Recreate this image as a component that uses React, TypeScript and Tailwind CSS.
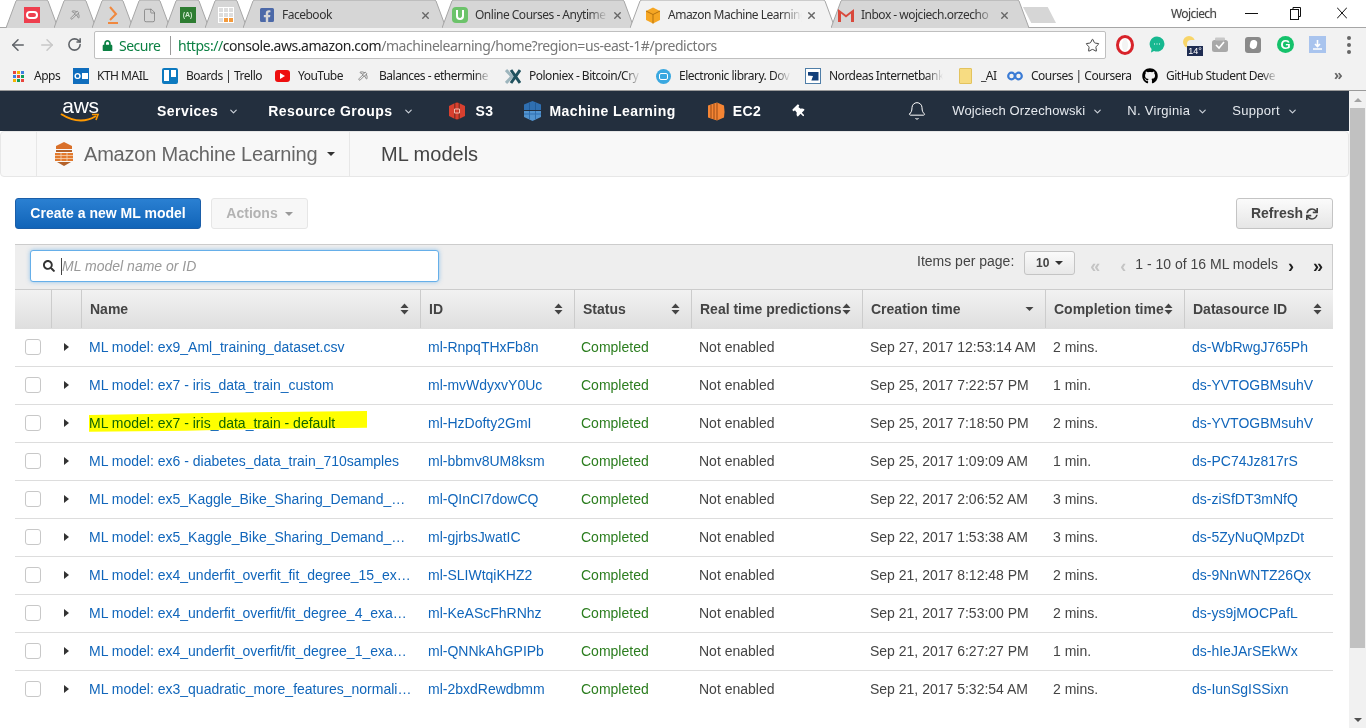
import type { ReactNode } from 'react';
import { ArrowLeft, ArrowRight, Bell, ChevronDown, File, Pickaxe, RotateCw, Star, X } from 'lucide-react';
import { FaFacebookSquare, FaGithub, FaLock, FaSearch, FaSync, FaThumbtack } from 'react-icons/fa';

const sans = 'font-["Liberation_Sans",Arial,sans-serif]';
const ui = 'font-["Noto_Sans",sans-serif]';
const cols = 'grid grid-cols-[36px_30px_339px_154px_117px_171px_183px_139px_149px]';
const fadeOut = '[mask-image:linear-gradient(to_right,black_85%,transparent)]';

const rows = [
  ['ML model: ex9_Aml_training_dataset.csv', 'ml-RnpqTHxFb8n', 'Sep 27, 2017 12:53:14 AM', '2 mins.', 'ds-WbRwgJ765Ph'],
  ['ML model: ex7 - iris_data_train_custom', 'ml-mvWdyxvY0Uc', 'Sep 25, 2017 7:22:57 PM', '1 min.', 'ds-YVTOGBMsuhV'],
  ['ML model: ex7 - iris_data_train - default', 'ml-HzDofty2GmI', 'Sep 25, 2017 7:18:50 PM', '2 mins.', 'ds-YVTOGBMsuhV'],
  ['ML model: ex6 - diabetes_data_train_710samples', 'ml-bbmv8UM8ksm', 'Sep 25, 2017 1:09:09 AM', '1 min.', 'ds-PC74Jz817rS'],
  ['ML model: ex5_Kaggle_Bike_Sharing_Demand_data_train', 'ml-QInCI7dowCQ', 'Sep 22, 2017 2:06:52 AM', '3 mins.', 'ds-ziSfDT3mNfQ'],
  ['ML model: ex5_Kaggle_Bike_Sharing_Demand_data_train', 'ml-gjrbsJwatIC', 'Sep 22, 2017 1:53:38 AM', '3 mins.', 'ds-5ZyNuQMpzDt'],
  ['ML model: ex4_underfit_overfit_fit_degree_15_examples', 'ml-SLIWtqiKHZ2', 'Sep 21, 2017 8:12:48 PM', '2 mins.', 'ds-9NnWNTZ26Qx'],
  ['ML model: ex4_underfit_overfit/fit_degree_4_examples', 'ml-KeAScFhRNhz', 'Sep 21, 2017 7:53:00 PM', '2 mins.', 'ds-ys9jMOCPafL'],
  ['ML model: ex4_underfit_overfit/fit_degree_1_examples', 'ml-QNNkAhGPIPb', 'Sep 21, 2017 6:27:27 PM', '1 min.', 'ds-hIeJArSEkWx'],
  ['ML model: ex3_quadratic_more_features_normalized', 'ml-2bxdRewdbmm', 'Sep 21, 2017 5:32:54 AM', '2 mins.', 'ds-IunSgISSixn'],
];

function Tab({ width, active, label, icon, pl = 15, pr = 15 }: { width: number; active?: boolean; label?: string; icon: ReactNode; pl?: number; pr?: number }) {
  return (
    <div className="relative h-[28px] -mr-[4px] shrink-0" style={{ width }}>
      <svg className="absolute inset-0" width={width} height={29}>
        <path
          d={`M0 28 L10 1 Q10.5 0 12 0 L${width - 12} 0 Q${width - 10.5} 0 ${width - 10} 1 L${width} 28`}
          fill={active ? '#f2f2f2' : '#d6d6d6'}
          stroke="#a6a6a6"
        />
      </svg>
      {label ? (
        <div className={`relative flex h-full items-center pt-[2px] text-[12px] tracking-[-0.5px] text-[#333] ${ui}`} style={{ paddingLeft: pl, paddingRight: pr }}>
          <span className="w-[16px] flex justify-center shrink-0">{icon}</span>
          <span className={`ml-[7px] flex-1 min-w-0 whitespace-nowrap overflow-hidden ${label.length > 10 ? fadeOut : ''}`}>{label}</span>
          <X size={11} strokeWidth={3} className="ml-[4px] text-[#666] shrink-0" />
        </div>
      ) : (
        <div className="relative flex h-full items-center justify-center pt-[2px]">{icon}</div>
      )}
    </div>
  );
}

function Bookmark({ width, icon, label, fade, gap = 8, start }: { width: number; icon: ReactNode; label: string; fade?: boolean; gap?: number; start?: boolean }) {
  return (
    <div className={`flex items-center shrink-0 ${fade ? 'pr-[14px]' : ''}`} style={{ width }}>
      <span className={`w-[16px] h-[16px] flex items-center shrink-0 ${start ? 'justify-start' : 'justify-center'}`}>{icon}</span>
      <span className={`whitespace-nowrap ${fade ? `flex-1 min-w-0 overflow-hidden ${fadeOut}` : ''}`} style={{ marginLeft: gap }}>{label}</span>
    </div>
  );
}

function Sort({ down }: { down?: boolean }) {
  return (
    <svg width="9" height="12" viewBox="0 0 9 12" className="shrink-0 text-[#444]" fill="currentColor">
      {!down && <path d="M0.5 5 L4.5 0.5 L8.5 5 Z" />}
      <path d={down ? 'M0.5 4 L8.5 4 L4.5 8 Z' : 'M0.5 7 L8.5 7 L4.5 11.5 Z'} />
    </svg>
  );
}

function Caret({ className }: { className?: string }) {
  return <span className={`inline-block w-0 h-0 border-x-[4px] border-x-transparent border-t-[4px] ${className ?? ''}`} />;
}

function NavChevron() {
  return <ChevronDown size={11} strokeWidth={2.5} className="text-[#ccd2da] shrink-0" />;
}

function TableHead({ label, sort = 'both' }: { label: string; sort?: 'both' | 'down' }) {
  return (
    <div className="flex items-center justify-between pl-[8px] pr-[11px] h-[38px] border-l border-[#cccccc] whitespace-nowrap">
      <span>{label}</span>
      <Sort down={sort === 'down'} />
    </div>
  );
}

export default function App() {
  return (
    <div className={`w-[1366px] h-[728px] overflow-hidden bg-white ${sans}`}>
      {/* tab strip */}
      <div className="relative h-[28px] flex items-start pl-[6px] border-b border-[#a6a6a6] bg-white">
        <Tab width={52} icon={
          <span className="w-[16px] h-[16px] bg-[#ee3f4e] flex items-center justify-center"><span className="w-[12px] h-[8px] rounded-[4px] border-2 border-white" /></span>
        } />
        <Tab width={42} icon={<Pickaxe size={10} className="text-[#888]" />} />
        <Tab width={41} icon={
          <svg width="10" height="18" viewBox="0 0 10 18" fill="none" stroke="#f0883e" strokeWidth="2"><path d="M2 1 L8 8 L2 14" /><path d="M0 17 H10" /></svg>
        } />
        <Tab width={41} icon={<File size={15} strokeWidth={1} className="text-[#666]" />} />
        <Tab width={43} icon={
          <span className="w-[16px] h-[16px] bg-[#2e7d32] flex items-center justify-center text-[7px] text-[#cfe8cf] font-bold">(A)</span>
        } />
        <Tab width={42} icon={
          <span className="w-[16px] h-[16px] bg-white grid grid-cols-3 gap-[1px] p-[1px]">
            <span className="bg-[#ddd]" /><span className="bg-[#ddd]" /><span className="bg-[#ddd]" />
            <span className="bg-[#ddd]" /><span className="bg-[#ddd]" /><span className="bg-[#ddd]" />
            <span className="bg-[#ddd]" /><span className="bg-[#f39a3c]" /><span className="bg-[#f39a3c]" />
          </span>
        } />
        <Tab width={203} pl={16} pr={15} label="Facebook" icon={<FaFacebookSquare size={16} className="text-[#4c69a8]" />} />
        <Tab width={192} pl={10} pr={11} label="Online Courses - Anytime" icon={
          <span className="w-[16px] h-[16px] rounded-[4px] bg-[#6cc36a] flex items-center justify-center">
            <span className="w-[8px] h-[10px] border-x-2 border-b-2 border-white rounded-b-[4px]" />
          </span>
        } />
        <Tab width={205} active pl={15} pr={18} label="Amazon Machine Learning" icon={
          <svg width="16" height="17" viewBox="0 0 16 17"><path d="M8 0.5 L15 4 V13 L8 16.5 L1 13 V4 Z" fill="#f6a623" /><path d="M1 4 L8 7.5 L15 4 M8 7.5 V16.5" fill="none" stroke="#b5720f" strokeWidth="1" /></svg>
        } />
        <Tab width={198} pl={7} pr={19} label="Inbox - wojciech.orzecho" icon={
          <svg width="16" height="14" viewBox="0 0 16 14"><path d="M0 1 L8 7 L16 1 V14 H13 V5.5 L8 9.5 L3 5.5 V14 H0 Z" fill="#d9493c" /></svg>
        } />
        <div className="ml-[-2px] mt-[7px] h-[16px] w-[33px] bg-[#d6d6d6] [clip-path:polygon(0_0,75%_0,100%_100%,25%_100%)] shrink-0" />
        <div className="ml-auto flex items-center h-[28px]">
          <span className={`w-[44px] whitespace-nowrap text-[12px] tracking-[-0.6px] text-[#444] [text-shadow:0_0_2px_#fff,0_0_1px_#888] ${ui}`}>Wojciech</span>
          <svg className="ml-[30px] -mt-[2px]" width="13" height="13" viewBox="0 0 13 13" stroke="#111"><path d="M0 6.5 H13" /></svg>
          <svg className="ml-[32px] -mt-[2px]" width="11" height="13" viewBox="0 0 11 13" fill="none" stroke="#111"><path d="M3 2.5 V0.5 H10.5 V9.5 H8" /><rect x="0.5" y="2.5" width="8" height="10" /></svg>
          <svg className="ml-[36px] mr-[19px] -mt-[2px]" width="10" height="12" viewBox="0 0 10 12" fill="none" stroke="#111"><path d="M0 0.5 L10 11.5 M10 0.5 L0 11.5" /></svg>
        </div>
      </div>

      {/* address bar */}
      <div className="h-[33px] bg-[#f2f2f2] flex items-center">
        <ArrowLeft size={18} className="ml-[9px] text-[#5f6368]" />
        <ArrowRight size={18} className="ml-[11px] text-[#c8c8c8]" />
        <RotateCw size={15} strokeWidth={2.5} className="ml-[11px] text-[#5f6368]" />
        <div className={`ml-[12px] w-[1012px] h-[28px] mt-[1px] pt-[1px] bg-white border border-[#bfbfbf] rounded-[2px] flex items-center text-[14px] ${ui}`}>
          <FaLock size={11} className="ml-[7px] text-[#0b8043]" />
          <span className="ml-[6px] text-[#0b8043] w-[44px] tracking-[-0.5px]">Secure</span>
          <span className="ml-[7px] w-px h-[19px] bg-[#999]" />
          <span className="ml-[7px] whitespace-nowrap tracking-[-0.44px]">
            <span className="text-[#0b8043]">https://</span>
            <span className="text-[#222]">console.aws.amazon.com</span>
            <span className="text-[#777]">/machinelearning/home?region=us-east-1#/predictors</span>
          </span>
          <Star size={15} strokeWidth={1.6} className="ml-auto mr-[5px] text-[#444]" />
        </div>
        <div className="relative flex items-center">
          <svg className="ml-[10px]" width="18" height="20" viewBox="0 0 18 20"><ellipse cx="9" cy="10" rx="7.5" ry="8.5" fill="#fff" stroke="#d8232a" strokeWidth="3" /><ellipse cx="9" cy="10" rx="3" ry="6" fill="#f4f4f4" /></svg>
          <svg className="ml-[15px]" width="16" height="17" viewBox="0 0 16 17"><path d="M8 0.5 A7.5 7.5 0 1 1 5 14.9 L2 16.5 L2.6 13 A7.5 7.5 0 0 1 8 0.5 Z" fill="#17b890" /><path d="M5 8 H6 M7.5 8 H8.5 M10 8 H11" stroke="#fff" strokeWidth="1.2" /></svg>
          <span className="relative ml-[17px] w-[20px] h-[20px]">
            <span className="absolute left-[1px] top-[1px] w-[12px] h-[12px] rounded-full bg-[#f8d568]" />
            <span className="absolute left-[5px] top-[5px] w-[15px] h-[8px] rounded-full bg-[#eceff3]" />
            <span className="absolute left-[5px] top-[11px] w-[16px] h-[10px] bg-[#1f2d52] text-white text-[9px] leading-[10px] text-center">14°</span>
          </span>
          <svg className="ml-[10px]" width="16" height="15" viewBox="0 0 16 15"><rect x="0" y="3" width="16" height="12" rx="2.5" fill="#a8a8a8" /><path d="M4 8 L7 11 L12 5" fill="none" stroke="#fff" strokeWidth="1.6" /><rect x="3" y="0.5" width="10" height="3" rx="1" fill="#c8c8c8" /></svg>
          <span className="ml-[17px] w-[16px] h-[16px] rounded-[3px] bg-[#8a8a8a] flex items-center justify-center"><span className="w-[7px] h-[9px] rounded-[4px] rotate-12 bg-white" /></span>
          <span className="ml-[16px] w-[17px] h-[17px] rounded-full bg-[#15c26b] text-white text-[13px] font-bold leading-[17px] text-center">G</span>
          <span className="ml-[15px] w-[17px] h-[17px] bg-[#a9c4ee] flex items-center justify-center">
            <svg width="11" height="11" viewBox="0 0 11 11" fill="none" stroke="#fff" strokeWidth="1.6"><path d="M5.5 1 V7 M3 5 L5.5 7.5 L8 5 M1 10 H10" /></svg>
          </span>
          <span className="ml-[21px] flex flex-col gap-[3px]">
            <span className="w-[4px] h-[4px] rounded-full bg-[#666]" />
            <span className="w-[4px] h-[4px] rounded-full bg-[#666]" />
            <span className="w-[4px] h-[4px] rounded-full bg-[#666]" />
          </span>
        </div>
      </div>

      {/* bookmarks */}
      <div className={`h-[30px] pt-[1px] bg-[#f2f2f2] border-b border-[#9a9a9a] flex items-center pl-[10px] text-[12px] tracking-[-0.5px] text-[#222] ${ui}`}>
        <Bookmark width={63} label="Apps" icon={
          <span className="grid grid-cols-3 gap-[1px]">
            {['#e8453c', '#f4b400', '#3d7fe0', '#3d7fe0', '#e8453c', '#0f9d58', '#f4b400', '#0f9d58', '#e8453c'].map((c, i) => (
              <span key={i} className="w-[3px] h-[3px]" style={{ background: c }} />
            ))}
          </span>
        } />
        <Bookmark width={89} label="KTH MAIL" icon={
          <span className="relative w-[16px] h-[16px] bg-[#0f6dbd] text-white text-[9px] font-bold leading-[16px] pl-[1px]">
            O<span className="absolute right-[1px] top-[5px] w-[6px] h-[6px] bg-white" />
          </span>
        } />
        <Bookmark width={112} label="Boards | Trello" icon={
          <span className="w-[16px] h-[16px] rounded-[2px] bg-[#0c79bf] flex gap-[2px] p-[2px]"><span className="w-[5px] h-[11px] bg-white" /><span className="w-[5px] h-[7px] bg-white" /></span>
        } />
        <Bookmark width={84} label="YouTube" icon={
          <span className="w-[15px] h-[12px] rounded-[3px] bg-[#ee0f0f] flex items-center justify-center"><span className="w-0 h-0 border-y-[3px] border-y-transparent border-l-[5px] border-l-white" /></span>
        } />
        <Bookmark width={147} fade start gap={5} label="Balances - ethermine" icon={<Pickaxe size={10} className="text-[#777]" />} />
        <Bookmark width={150} fade label="Poloniex - Bitcoin/Cry" icon={
          <svg width="16" height="15" viewBox="0 0 16 15" fill="none" strokeWidth="3"><path d="M1 1 L7 7.5 L1 14" stroke="#9db5bd" /><path d="M15 1 L6 14 M6 1 L15 14" stroke="#20525f" /></svg>
        } />
        <Bookmark width={150} fade label="Electronic library. Dov" icon={
          <span className="w-[15px] h-[15px] rounded-full bg-[#3aa8e0] flex items-center justify-center"><span className="w-[9px] h-[7px] rounded-[2px] border border-white" /></span>
        } />
        <Bookmark width={152} fade label="Nordeas Internetbank" icon={
          <span className="w-[16px] h-[16px] border border-[#4f7ea8] bg-white flex items-center justify-center"><span className="w-[11px] h-[9px] bg-[#13407a] [clip-path:polygon(0_0,100%_0,100%_100%,35%_100%,50%_50%,0_45%)]" /></span>
        } />
        <Bookmark width={50} label="_AI" icon={
          <span className="w-[13px] h-[16px] bg-[#f7dc82] border border-[#e3c35e] rounded-[1px]" />
        } />
        <Bookmark width={135} label="Courses | Coursera" icon={
          <svg width="16" height="10" viewBox="0 0 16 10" fill="none" stroke="#3a7bd5" strokeWidth="2.2"><circle cx="4.5" cy="5" r="3.3" /><circle cx="11.5" cy="5" r="3.3" /></svg>
        } />
        <Bookmark width={150} fade label="GitHub Student Deve" icon={<FaGithub size={16} className="text-black" />} />
        <span className="ml-[42px] text-[#666] text-[14px] font-bold -mt-[4px]">»</span>
      </div>

      {/* page with scrollbar */}
      <div className="flex h-[637px]">
        <div className="w-[1349px] shrink-0">
          <nav className="h-[40px] bg-[#232f3e] flex items-center text-white text-[14px] pl-[60px]">
            <span className="relative w-[41px] h-[25px] shrink-0">
              <span className="absolute left-0 right-0 -top-[5px] text-center text-[21px] leading-[24px] tracking-[-0.3px] text-white">aws</span>
              <svg className="absolute left-0 top-[14px]" width="41" height="10" viewBox="0 0 41 10" fill="none" stroke="#f90" strokeWidth="2"><path d="M1 1 Q20 13 36 3" /><path d="M32 1.5 L38 1.5 L36 7" strokeWidth="1.6" /></svg>
            </span>
            <span className="ml-[56px] font-bold tracking-[0.45px]">Services</span>
            <span className="ml-[10px]"><NavChevron /></span>
            <span className="ml-[29px] font-bold tracking-[0.45px]">Resource Groups</span>
            <span className="ml-[11px]"><NavChevron /></span>
            <svg className="ml-[35px] -mt-[1px]" width="16" height="18" viewBox="0 0 16 18">
              <path d="M0 4 L5 1.5 V16.5 L0 14 Z" fill="#d8402f" />
              <path d="M16 4 L11 1.5 V16.5 L16 14 Z" fill="#d8402f" />
              <path d="M5 1.5 L8 0 L11 1.5 V16.5 L8 18 L5 16.5 Z" fill="#8c3123" />
              <path d="M6.5 1 H9.5 V17 H6.5 Z" fill="#d8402f" />
              <path d="M5.5 7 H10.5 V11 H5.5 Z" fill="none" stroke="#f2b8ac" strokeWidth="1" />
            </svg>
            <span className="ml-[10px] font-bold tracking-[0.45px]">S3</span>
            <svg className="ml-[30px]" width="19" height="20" viewBox="0 0 19 20">
              <path d="M9.5 0 L18 3.5 V9 H1 V3.5 Z" fill="#2f6fb0" />
              <path d="M1 10 H18 V16 L9.5 20 L1 16 Z" fill="#5294cf" />
              <path d="M6.5 1.5 V9 M12.5 1.5 V9" stroke="#205b99" />
              <path d="M1 13 H18 M6.5 10 V18 M12.5 10 V18" stroke="#2f6fb0" />
            </svg>
            <span className="ml-[7px] font-bold tracking-[0.45px]">Machine Learning</span>
            <svg className="ml-[31px]" width="18" height="19" viewBox="0 0 18 19">
              <path d="M1 3.5 L10 0.5 L17 3.5 Q18 9.5 17 15.5 L10 18.5 L1 15.5 Z" fill="#f58534" />
              <path d="M4 3 V16 M7 2 V17 M10 1 V18" stroke="#a9551d" strokeWidth="1.2" />
            </svg>
            <span className="ml-[8px] font-bold tracking-[0.45px]">EC2</span>
            <FaThumbtack size={13} className="ml-[32px] text-white -rotate-45" />
            <Bell size={20} strokeWidth={1.2} className="ml-[101px] text-white" />
            <span className="ml-[25px] text-[13px] tracking-[0.12px] text-[#e6eaef] whitespace-nowrap">Wojciech Orzechowski</span>
            <span className="ml-[7px]"><NavChevron /></span>
            <span className="ml-[24px] text-[13px] tracking-[0.3px] text-[#e6eaef] whitespace-nowrap">N. Virginia</span>
            <span className="ml-[7px]"><NavChevron /></span>
            <span className="ml-[24px] text-[13px] tracking-[0.3px] text-[#e6eaef] whitespace-nowrap">Support</span>
            <span className="ml-[7px]"><NavChevron /></span>
          </nav>

          <div className="h-[46px] bg-[#f8f8f8] border border-[#e7e7e7] rounded-[4px] flex items-center text-[20px]">
            <div className="w-[36px] h-full border-r border-[#e7e7e7] shrink-0" />
            <div className="w-[313px] h-full border-r border-[#e7e7e7] shrink-0 flex items-center pl-[17px] text-[#666]">
              <svg width="20" height="24" viewBox="0 0 20 24" className="shrink-0">
                <path d="M10 0 L18 4 V7 H2 V4 Z" fill="#d9702a" />
                <path d="M2 8 H18 V10 H2 Z" fill="#b4622a" />
                <path d="M1 11 H19 V19 H1 Z" fill="#e27a2e" />
                <path d="M3 20 H17 L10 24 Z" fill="#b4622a" />
                <path d="M1 13.5 H19 M1 16.5 H19 M7 11 V19 M13 11 V19" stroke="#f5d3b5" strokeWidth="0.8" />
              </svg>
              <span className="ml-[10px] whitespace-nowrap tracking-[-0.2px]">Amazon Machine Learning</span>
              <Caret className="ml-[10px] border-t-[#333]" />
            </div>
            <span className="ml-[31px] text-[#444] whitespace-nowrap">ML models</span>
          </div>

          <div className="pl-[15px] pt-[21px]">
            <div className="flex w-[1318px] items-center">
              <button className="h-[31px] w-[186px] rounded-[3px] border border-[#1b5ea8] bg-gradient-to-b from-[#2a80d2] to-[#1064b8] text-white text-[14px] font-bold">Create a new ML model</button>
              <button className="ml-[10px] h-[31px] w-[97px] rounded-[3px] border border-[#e6e6e6] bg-[#f7f7f7] text-[#b3b3b3] text-[14px] font-bold flex items-center justify-center gap-[7px]">
                Actions <Caret className="border-t-[#999]" />
              </button>
              <button className="ml-auto h-[31px] w-[97px] rounded-[3px] border border-[#c4c4c4] bg-gradient-to-b from-[#fbfbfb] to-[#e6e6e6] text-[#444] text-[14px] font-bold flex items-center justify-center gap-[3px]">
                Refresh <FaSync size={12} />
              </button>
            </div>

            <div className="w-[1318px] mt-[15px] relative">
              <div className="h-[46px] bg-[#eeeeee] border-y border-r border-[#cccccc] flex items-center text-[14px] text-[#444]">
                <div className="ml-[15px] h-[32px] w-[409px] -mt-[2px] bg-white rounded-[3px] border border-[#66afe9] shadow-[0_0_4px_rgba(102,175,233,0.7)] flex items-center">
                  <FaSearch size={12} className="ml-[12px] text-[#333]" />
                  <span className="ml-[6px] w-px h-[17px] bg-[#444]" />
                  <span className="italic text-[#999]">ML model name or ID</span>
                </div>
                <span className="ml-[478px] -mt-[11px] whitespace-nowrap text-[14px]">Items per page:</span>
                <div className="ml-[10px] -mt-[9px] h-[24px] w-[51px] rounded-[3px] border border-[#c4c4c4] bg-gradient-to-b from-[#fafafa] to-[#e8e8e8] flex items-center justify-center gap-[6px] text-[12px] font-bold">
                  10 <Caret className="border-t-[#333]" />
                </div>
                <span className="ml-[15px] -mt-[2px] text-[#c4c4c4] text-[18px] font-bold">«</span>
                <span className="ml-[20px] -mt-[2px] text-[#c4c4c4] text-[18px] font-bold">‹</span>
                <span className="ml-[9px] -mt-[6px] whitespace-nowrap">1 - 10 of 16 ML models</span>
                <span className="ml-[10px] -mt-[2px] text-[#222] text-[18px] font-bold">›</span>
                <span className="ml-[19px] -mt-[2px] text-[#222] text-[18px] font-bold">»</span>
              </div>

              <div className={`${cols} h-[39px] bg-gradient-to-b from-[#f2f2f2] to-[#dedede] text-[14px] font-bold text-[#444] items-start`}>
                <div />
                <div className="h-[38px] border-l border-[#cccccc]" />
                <TableHead label="Name" />
                <TableHead label="ID" />
                <TableHead label="Status" />
                <TableHead label="Real time predictions" />
                <TableHead label="Creation time" sort="down" />
                <TableHead label="Completion time" />
                <TableHead label="Datasource ID" />
              </div>

              {rows.map((r, i) => (
                <div key={r[1]} className={`${cols} h-[38px] items-center text-[14px] text-[#444] border-b ${i < rows.length - 1 ? 'border-[#dddddd]' : 'border-transparent'}`}>
                  <span className="ml-[10px] -mt-[2px] w-[16px] h-[16px] rounded-[3px] border border-[#c8c8c8] bg-white" />
                  <span className="ml-[13px] -mt-[2px] w-0 h-0 border-y-[4px] border-y-transparent border-l-[5px] border-l-[#333]" />
                  <a className="pl-[8px] pr-[8px] truncate text-[#1166bb]">{r[0]}</a>
                  <a className="pl-[8px] text-[#1166bb] whitespace-nowrap">{r[1]}</a>
                  <span className="pl-[7px] text-[#2b7d1e]">Completed</span>
                  <span className="pl-[8px]">Not enabled</span>
                  <span className="pl-[8px] whitespace-nowrap">{r[2]}</span>
                  <span className="pl-[8px]">{r[3]}</span>
                  <a className="pl-[8px] text-[#1166bb] whitespace-nowrap">{r[4]}</a>
                </div>
              ))}

              {/* marker highlight drawn over the third row */}
              <svg className="absolute left-[74px] top-[166px] mix-blend-multiply pointer-events-none" width="280" height="24" viewBox="0 0 280 24">
                <path d="M0 5 L131 2.7 L278 1 L278 17.7 L170 19 L97 20.7 L0 21.7 Z" fill="#ffff00" />
              </svg>
            </div>
          </div>
        </div>

        {/* scrollbar */}
        <div className="w-[17px] h-full bg-[#f1f1f1] flex flex-col items-center">
          <span className="h-[17px] flex items-center justify-center">
            <span className="w-0 h-0 border-x-[4px] border-x-transparent border-b-[4px] border-b-[#a3a3a3]" />
          </span>
          <span className="w-[15px] h-[540px] bg-[#c1c1c1]" />
          <span className="mt-auto h-[17px] flex items-center justify-center">
            <span className="w-0 h-0 border-x-[4px] border-x-transparent border-t-[4px] border-t-[#505050]" />
          </span>
        </div>
      </div>
    </div>
  );
}
